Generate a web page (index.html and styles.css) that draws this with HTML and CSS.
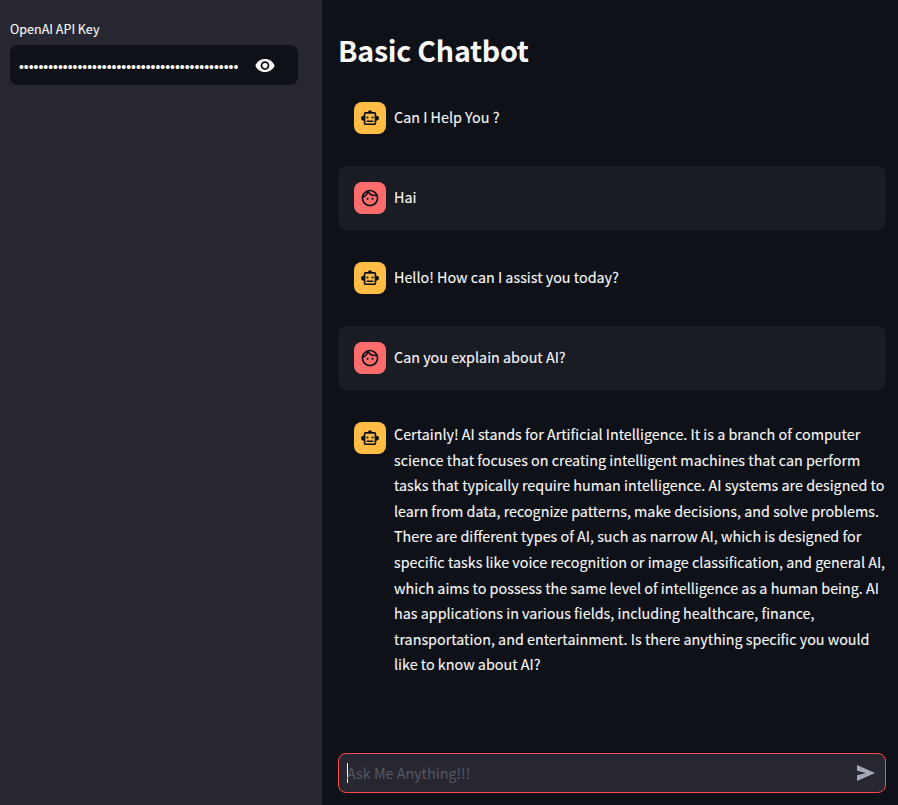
FILE: index.html
```html
<!DOCTYPE html>
<html lang="en">
<head>
<meta charset="utf-8">
<title>Basic Chatbot</title>
<link rel="stylesheet" href="styles.css">
</head>
<body>
<svg width="0" height="0" class="defs">
  <symbol id="robot" viewBox="0 0 20 20"><rect x="4.600" y="4.900" width="10.800" height="11.300" rx=".8" fill="none" stroke="#0e1117" stroke-width="1.600"/><path d="M8 4.300a2 2 0 0 1 4 0zM4 7.800a2.500 2.500 0 0 0-3 2.400 2.500 2.500 0 0 0 3 2.400zM16 7.800a2.500 2.500 0 0 1 3 2.400 2.500 2.500 0 0 1-3 2.400zM6.700 12.500h6.600v1.500H6.700z"/><circle cx="7.500" cy="9.500" r="1.050"/><circle cx="12.500" cy="9.500" r="1.050"/></symbol>
  <symbol id="face" viewBox="0 0 24 24"><path d="M10.250 13c0 .69-.56 1.250-1.250 1.250S7.750 13.690 7.750 13s.56-1.250 1.250-1.250 1.250.56 1.250 1.250zM15 11.750c-.69 0-1.250.56-1.250 1.250s.56 1.250 1.250 1.250 1.250-.56 1.250-1.250-.56-1.250-1.250-1.250zm7 .25c0 5.520-4.480 10-10 10S2 17.520 2 12 6.480 2 12 2s10 4.480 10 10zM10.660 4.120C12.060 6.440 14.600 8 17.500 8c.46 0 .91-.05 1.340-.12C17.440 5.560 14.900 4 12 4c-.46 0-.91.05-1.340.12zM4.420 9.470c1.710-.97 3.030-2.550 3.660-4.440C6.370 6 5.050 7.580 4.420 9.470zM20 12c0-.78-.12-1.530-.33-2.240-.7.150-1.420.24-2.170.24-3.130 0-5.920-1.440-7.760-3.690C8.690 8.870 6.600 10.880 4 11.860c.01.04 0 .09 0 .14 0 4.410 3.590 8 8 8s8-3.590 8-8z"/></symbol>
</svg>
<div class="app">
  <aside class="sidebar">
    <div class="label">OpenAI API Key</div>
    <div class="key">
      <span class="dots">•••••••••••••••••••••••••••••••••••••••••••••</span>
      <svg class="eye" viewBox="0 0 24 24"><path d="M12 4.500C7 4.500 2.730 7.610 1 12c1.730 4.390 6 7.500 11 7.500s9.270-3.110 11-7.500c-1.730-4.390-6-7.500-11-7.500zM12 17c-2.760 0-5-2.240-5-5s2.240-5 5-5 5 2.240 5 5-2.240 5-5 5zm0-8c-1.660 0-3 1.340-3 3s1.340 3 3 3 3-1.340 3-3-1.340-3-3-3z"/></svg>
    </div>
  </aside>
  <main class="main">
    <h1>Basic Chatbot</h1>
    <div class="messages">
      <div class="msg"><div class="avatar bot"><svg><use href="#robot"/></svg></div><p>Can I Help You ?</p></div>
      <div class="msg mine"><div class="avatar user"><svg><use href="#face"/></svg></div><p>Hai</p></div>
      <div class="msg"><div class="avatar bot"><svg><use href="#robot"/></svg></div><p>Hello! How can I assist you today?</p></div>
      <div class="msg mine"><div class="avatar user"><svg><use href="#face"/></svg></div><p>Can you explain about AI?</p></div>
      <div class="msg long"><div class="avatar bot"><svg><use href="#robot"/></svg></div><p>Certainly! AI stands for Artificial Intelligence. It is a branch of computer<br>science that focuses on creating intelligent machines that can perform<br>tasks that typically require human intelligence. AI systems are designed to<br>learn from data, recognize patterns, make decisions, and solve problems.<br>There are different types of AI, such as narrow AI, which is designed for<br>specific tasks like voice recognition or image classification, and general AI,<br>which aims to possess the same level of intelligence as a human being. AI<br>has applications in various fields, including healthcare, finance,<br>transportation, and entertainment. Is there anything specific you would<br>like to know about AI?</p></div>
    </div>
    <div class="composer">
      <span class="caret"></span><span class="placeholder">Ask Me Anything!!!</span>
      <svg class="send" viewBox="0 0 18 16"><path d="M0 0 18 8 0 16V10.200L9 8 0 5.800z"/></svg>
    </div>
  </main>
</div>
</body>
</html>
```
FILE: styles.css
```css
* { box-sizing: border-box; }
body {
  margin: 0;
  background: #0e1117;
  color: #fafafa;
  font-family: "Noto Sans CJK SC", sans-serif;
  font-size: 14.330px;
  line-height: 25.600px;
}
.defs { display: block; position: absolute; }
.app { display: flex; height: 805px; overflow: hidden; }
.sidebar { width: 322px; background: #262730; padding: 18px 24px 0 10px; }
.label { font-size: 12.560px; line-height: 21px; height: 27px; -webkit-text-stroke: .1px; }
.key {
  height: 40px;
  border-radius: 8px;
  background: #0e1117;
  display: flex;
  align-items: center;
  padding: 0 22px 0 9px;
}
.dots {
  width: 220px;
  margin-top: 3px;
  white-space: nowrap;
  font: 13.930px/20px "Liberation Sans", sans-serif;
}
.eye { width: 22px; height: 21px; fill: #fafafa; margin-left: auto; }
.main {
  flex: 1;
  display: flex;
  flex-direction: column;
  padding: 30px 12px 12px 16px;
}
h1 { margin: 0; height: 56px; font-size: 28.640px; letter-spacing: -.26px; line-height: 40px; font-weight: 700; white-space: nowrap; }
.messages { display: flex; flex-direction: column; gap: 16px; }
.msg { display: flex; gap: 8px; align-items: center; min-height: 64px; padding: 16px 0 16px 16px; border-radius: 8px; }
.mine { background: #1a1c24; }
.long { align-items: flex-start; }
.avatar { width: 32px; height: 32px; flex: none; border-radius: 8px; display: flex; align-items: center; justify-content: center; }
.avatar svg { width: 20px; height: 20px; fill: #0e1117; }
.bot { background: #ffbd45; }
.user { background: #ff6c6c; }
p { margin: -1px 0 1px; white-space: nowrap; -webkit-text-stroke: .1px; }
.composer {
  margin-top: auto;
  height: 40px;
  border: 1px solid #ff4b4b;
  border-radius: 8px;
  background: #262730;
  display: flex;
  align-items: center;
  padding: 0 10px 0 8px;
}
.caret { width: 1px; height: 20px; background: #fafafa; margin-right: -1px; }
.placeholder { color: #555763; }
.send { width: 18px; height: 16px; fill: #a3a8b8; margin-left: auto; }
```
